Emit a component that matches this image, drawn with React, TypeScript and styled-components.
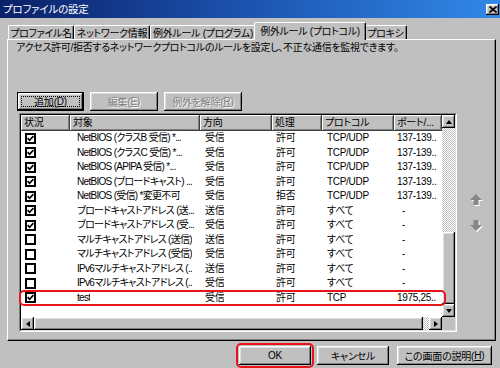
import React from "react"
import styled, { createGlobalStyle, css } from "styled-components"

const GlobalStyle = createGlobalStyle`
  html, body {
    margin: 0;
    padding: 0;
    background: #c0c0c0;
  }
  body {
    font-family: "Liberation Sans", "Noto Sans CJK JP", sans-serif;
    font-size: 10px;
    color: #000;
    font-feature-settings: "palt";
  }
`

interface Rule {
  on: boolean
  name: string
  dir: string
  act: string
  proto: string
  port: string
}

const rules: Rule[] = [
  { on: true, name: "NetBIOS (クラスB 受信) *...", dir: "受信", act: "許可", proto: "TCP/UDP", port: "137-139.." },
  { on: true, name: "NetBIOS (クラスC 受信) *...", dir: "受信", act: "許可", proto: "TCP/UDP", port: "137-139.." },
  { on: true, name: "NetBIOS (APIPA 受信) *...", dir: "受信", act: "許可", proto: "TCP/UDP", port: "137-139.." },
  { on: true, name: "NetBIOS (ブロードキャスト) ...", dir: "受信", act: "許可", proto: "TCP/UDP", port: "137-139.." },
  { on: true, name: "NetBIOS (受信) *変更不可", dir: "受信", act: "拒否", proto: "TCP/UDP", port: "137-139.." },
  { on: true, name: "ブロードキャストアドレス (送...", dir: "送信", act: "許可", proto: "すべて", port: "-" },
  { on: true, name: "ブロードキャストアドレス (受...", dir: "受信", act: "許可", proto: "すべて", port: "-" },
  { on: false, name: "マルチキャストアドレス (送信)", dir: "送信", act: "許可", proto: "すべて", port: "-" },
  { on: false, name: "マルチキャストアドレス (受信)", dir: "受信", act: "許可", proto: "すべて", port: "-" },
  { on: false, name: "IPv6マルチキャストアドレス (..", dir: "送信", act: "許可", proto: "すべて", port: "-" },
  { on: false, name: "IPv6マルチキャストアドレス (..", dir: "受信", act: "許可", proto: "すべて", port: "-" },
  { on: true, name: "test", dir: "受信", act: "許可", proto: "TCP", port: "1975,25.." },
]

const tabs = [
  { label: "プロファイル名", w: 66 },
  { label: "ネットワーク情報", w: 76 },
  { label: "例外ルール (プログラム)", w: 106 },
  { label: "例外ルール (プロトコル)", w: 108, active: true },
  { label: "プロキシ", w: 43 },
]

const columns = ["状況", "対象", "方向", "処理", "プロトコル", "ポート/..."]
const COLS = "49px 130px 72px 50px 72px 48px"
const cellPad = [4, 7, 5, 4, 5, 3]
const ROW_H = 14.5

const App = () => {
  return (
    <Window>
      <GlobalStyle />
      <TitleBar>
        <TitleText>プロファイルの設定</TitleText>
        <CloseButton>
          <svg width="8" height="7" viewBox="0 0 8 7">
            <path d="M0.5 0.5 L7.5 6.5 M7.5 0.5 L0.5 6.5" stroke="#000" strokeWidth="1.6" />
          </svg>
        </CloseButton>
      </TitleBar>

      <TabStrip>
        {tabs.map((t) => (
          <Tab key={t.label} $w={t.w} $active={!!t.active}>
            {t.label}
          </Tab>
        ))}
      </TabStrip>

      <Panel>
        <Description>
          アクセス許可/拒否するネットワークプロトコルのルールを設定し、不正な通信を監視できます。
        </Description>

        <ButtonRow>
          <PushButton $w={67} $default>
            <FocusRing>追加(<u>D</u>)</FocusRing>
          </PushButton>
          <PushButton $w={68} disabled>
            編集(<u>E</u>)
          </PushButton>
          <PushButton $w={78} disabled>
            例外を解除(<u>R</u>)
          </PushButton>
        </ButtonRow>

        <ListArea>
          <ListFrame>
            <ListInner>
              <ListContent>
                <HeaderRow>
                  {columns.map((c) => (
                    <HeaderCell key={c}>{c}</HeaderCell>
                  ))}
                </HeaderRow>
                {rules.map((r, i) => (
                  <Row key={i}>
                    <Cell $pad={cellPad[0]}>
                      <CheckBox>
                        {r.on && (
                          <svg width="7" height="7" viewBox="0 0 7 7">
                            <path d="M0.6 3.2 L2.6 5.3 L6.4 1.2" fill="none" stroke="#000" strokeWidth="1.7" />
                          </svg>
                        )}
                      </CheckBox>
                    </Cell>
                    <Cell $pad={cellPad[1]}>
                      <CellText $tight>{r.name}</CellText>
                    </Cell>
                    <Cell $pad={cellPad[2]}>
                      <CellText>{r.dir}</CellText>
                    </Cell>
                    <Cell $pad={cellPad[3]}>
                      <CellText>{r.act}</CellText>
                    </Cell>
                    <Cell $pad={cellPad[4]}>
                      <CellText>{r.proto}</CellText>
                    </Cell>
                    <Cell $pad={r.port === "-" ? 8 : cellPad[5]}>
                      <CellText>{r.port}</CellText>
                    </Cell>
                  </Row>
                ))}
              </ListContent>

              <VScroll>
                <ScrollButton>
                  <Triangle $dir="up" />
                </ScrollButton>
                <Track style={{ height: 104 }} />
                <Thumb style={{ height: 72 }} />
                <ScrollButton>
                  <Triangle $dir="down" />
                </ScrollButton>
              </VScroll>

              <HScroll>
                <ScrollButton>
                  <Triangle $dir="left" />
                </ScrollButton>
                <Thumb style={{ width: 389 }} />
                <Track style={{ width: 6 }} />
                <ScrollButton>
                  <Triangle $dir="right" />
                </ScrollButton>
              </HScroll>

              <Corner />
            </ListInner>
            <RowHighlight style={{ top: 16 + ROW_H * 11 + 0.5 }} />
          </ListFrame>

          <SideArrows>
            <MoveArrow viewBox="0 0 14 13" width="14" height="13">
              <path d="M7 1 L13 7 L9.5 7 L9.5 12 L4.5 12 L4.5 7 L1 7 Z" fill="#fff" transform="translate(1 1)" />
              <path d="M7 1 L13 7 L9.5 7 L9.5 12 L4.5 12 L4.5 7 L1 7 Z" fill="#878787" />
            </MoveArrow>
            <MoveArrow viewBox="0 0 14 13" width="14" height="13">
              <path d="M7 12 L13 6 L9.5 6 L9.5 1 L4.5 1 L4.5 6 L1 6 Z" fill="#fff" transform="translate(1 1)" />
              <path d="M7 12 L13 6 L9.5 6 L9.5 1 L4.5 1 L4.5 6 L1 6 Z" fill="#878787" />
            </MoveArrow>
          </SideArrows>
        </ListArea>
      </Panel>

      <Footer>
        <Highlight>
          <PushButton $w={72}>OK</PushButton>
        </Highlight>
        <PushButton $w={72} style={{ marginLeft: 3 }}>
          キャンセル
        </PushButton>
        <PushButton $w={95} style={{ marginLeft: 8 }}>
          この画面の説明(<u>H</u>)
        </PushButton>
      </Footer>
    </Window>
  )
}

export default App

const raised = css`
  background: #c0c0c0;
  box-shadow: inset -1px -1px #000, inset 1px 1px #fff, inset -2px -2px #808080,
    inset 2px 2px #dfdfdf;
`

const Window = styled.div`
  width: 500px;
  height: 368px;
  display: flex;
  flex-direction: column;
  background: #c0c0c0;
  overflow: hidden;
`

const TitleBar = styled.div`
  height: 18px;
  flex: none;
  display: flex;
  align-items: center;
  justify-content: space-between;
  padding: 0 1px 0 3px;
  background: linear-gradient(to right, #0a2068 0%, #1c54b0 50%, #3288e8 100%);
`

const TitleText = styled.span`
  color: #fff;
  font-size: 10.5px;
  letter-spacing: -0.2px;
  line-height: 18px;
`

const CloseButton = styled.div`
  width: 13px;
  height: 11px;
  ${raised};
  display: flex;
  align-items: center;
  justify-content: center;
`

const TabStrip = styled.div`
  height: 21px;
  flex: none;
  display: flex;
  align-items: flex-end;
  padding-left: 8px;
  position: relative;
  z-index: 1;
`

const Tab = styled.div<{ $w: number; $active: boolean }>`
  box-sizing: border-box;
  width: ${(p) => (p.$active ? p.$w + 4 : p.$w)}px;
  height: ${(p) => (p.$active ? 18 : 14)}px;
  margin: 0 ${(p) => (p.$active ? -2 : 0)}px ${(p) => (p.$active ? -1 : 0)}px;
  position: relative;
  z-index: ${(p) => (p.$active ? 2 : 0)};
  background: #c0c0c0;
  border-top: 1px solid #fff;
  border-left: 1px solid #fff;
  border-right: 1px solid #000;
  box-shadow: inset -1px 0 #808080;
  border-radius: 2px 2px 0 0;
  display: flex;
  align-items: center;
  justify-content: center;
  padding-bottom: ${(p) => (p.$active ? 2 : 0)}px;
  font-size: 10px;
  letter-spacing: -0.3px;
  white-space: nowrap;
  overflow: hidden;
`

const Panel = styled.div`
  box-sizing: border-box;
  height: 302px;
  flex: none;
  margin: 0 4px 0 7px;
  border-top: 1px solid #fff;
  border-left: 1px solid #fff;
  border-right: 1px solid #000;
  border-bottom: 1px solid #000;
  box-shadow: inset -1px -1px #808080;
  display: flex;
  flex-direction: column;
`

const Description = styled.div`
  margin: 1px 0 0 8px;
  height: 14px;
  line-height: 14px;
  font-size: 10px;
  letter-spacing: -0.3px;
  white-space: nowrap;
`

const ButtonRow = styled.div`
  display: flex;
  gap: 6px;
  margin: 37px 0 0 9px;
`

const PushButton = styled.button<{ $w: number; $default?: boolean }>`
  box-sizing: border-box;
  width: ${(p) => p.$w}px;
  height: 19px;
  padding: 0;
  border: ${(p) => (p.$default ? "1px solid #000" : "none")};
  ${raised};
  font-family: inherit;
  font-size: 10px;
  letter-spacing: -0.2px;
  font-feature-settings: "palt";
  color: #000;
  display: flex;
  align-items: center;
  justify-content: center;
  white-space: nowrap;

  u {
    text-decoration: underline;
    text-underline-offset: 1px;
  }

  &:disabled {
    color: #808080;
    text-shadow: 1px 1px #fff;
  }
`

const FocusRing = styled.span`
  box-sizing: border-box;
  width: calc(100% - 6px);
  height: calc(100% - 6px);
  border: 1px dotted #000;
  display: flex;
  align-items: center;
  justify-content: center;
`

const ListArea = styled.div`
  display: flex;
  margin: 2px 0 0 11px;
`

const ListFrame = styled.div`
  position: relative;
  flex: none;
  width: 438px;
  height: 219px;
  box-sizing: border-box;
  border: 1px solid;
  border-color: #808080 #fff #fff #808080;
`

const ListInner = styled.div`
  box-sizing: border-box;
  width: 100%;
  height: 100%;
  border: 1px solid;
  border-color: #000 #dfdfdf #dfdfdf #000;
  display: grid;
  grid-template-columns: 421px 13px;
  grid-template-rows: 202px 13px;
`

const ListContent = styled.div`
  background: #fff;
  overflow: hidden;
`

const HeaderRow = styled.div`
  display: grid;
  grid-template-columns: ${COLS};
  height: 16px;
`

const HeaderCell = styled.div`
  ${raised};
  box-shadow: inset -1px -1px #404040, inset 1px 1px #fff, inset -2px -2px #808080;
  padding-left: 3px;
  line-height: 15px;
  font-size: 10px;
  letter-spacing: -0.2px;
  white-space: nowrap;
  overflow: hidden;
`

const Row = styled.div`
  display: grid;
  grid-template-columns: ${COLS};
  height: ${ROW_H}px;
  align-items: center;
`

const Cell = styled.div<{ $pad: number }>`
  padding-left: ${(p) => p.$pad}px;
  padding-right: 1px;
  min-width: 0;
  overflow: hidden;
  display: flex;
  align-items: center;
  height: 100%;
`

const CellText = styled.span<{ $tight?: boolean }>`
  white-space: nowrap;
  overflow: hidden;
  text-overflow: ellipsis;
  font-size: 10px;
  letter-spacing: ${(p) => (p.$tight ? -0.7 : -0.3)}px;
  line-height: ${ROW_H}px;
`

const CheckBox = styled.span`
  box-sizing: border-box;
  width: 11px;
  height: 11px;
  flex: none;
  border: 2px solid #000;
  background: #fff;
  display: flex;
  align-items: center;
  justify-content: center;
`

const VScroll = styled.div`
  display: flex;
  flex-direction: column;
`

const HScroll = styled.div`
  display: flex;
`

const ScrollButton = styled.div`
  flex: none;
  width: 13px;
  height: 13px;
  ${raised};
  display: flex;
  align-items: center;
  justify-content: center;
`

const Triangle = styled.span<{ $dir: "up" | "down" | "left" | "right" }>`
  width: 0;
  height: 0;
  border-style: solid;
  ${(p) =>
    p.$dir === "up"
      ? css`border-width: 0 3.5px 4px 3.5px; border-color: transparent transparent #000 transparent;`
      : p.$dir === "down"
      ? css`border-width: 4px 3.5px 0 3.5px; border-color: #000 transparent transparent transparent;`
      : p.$dir === "left"
      ? css`border-width: 3.5px 4px 3.5px 0; border-color: transparent #000 transparent transparent;`
      : css`border-width: 3.5px 0 3.5px 4px; border-color: transparent transparent transparent #000;`}
`

const Track = styled.div`
  flex: none;
  background: repeating-conic-gradient(#fff 0 25%, #c0c0c0 0 50%) 0 0 / 2px 2px;
`

const Thumb = styled.div`
  flex: none;
  ${raised};
  height: 13px;
  width: 13px;
`

const Corner = styled.div`
  background: #c0c0c0;
`

const RowHighlight = styled.div`
  position: absolute;
  left: -1px;
  width: 427px;
  height: 16px;
  box-sizing: border-box;
  border: 2px solid #e8141c;
  border-radius: 5px;
  pointer-events: none;
`

const SideArrows = styled.div`
  flex: 1;
  display: flex;
  flex-direction: column;
  align-items: center;
  gap: 13px;
  padding-top: 80px;
`

const MoveArrow = styled.svg`
  display: block;
`

const Footer = styled.div`
  flex: 1;
  display: flex;
  align-items: center;
  justify-content: flex-end;
  padding: 1px 8px 0 0;
`

const Highlight = styled.div`
  border: 2px solid #e8141c;
  border-radius: 5px;
  padding: 1px;
  display: flex;
`
